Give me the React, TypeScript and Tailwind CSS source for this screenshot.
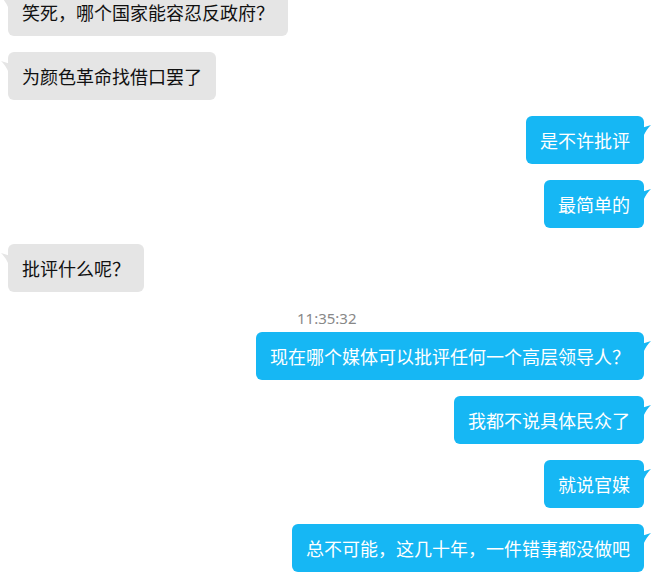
import React from "react";

type Msg = { side: "l" | "r"; text: string; time?: string };

const msgs: Msg[] = [
  { side: "l", text: "笑死，哪个国家能容忍反政府？" },
  { side: "l", text: "为颜色革命找借口罢了" },
  { side: "r", text: "是不许批评" },
  { side: "r", text: "最简单的" },
  { side: "l", text: "批评什么呢？" },
  { side: "r", text: "现在哪个媒体可以批评任何一个高层领导人？", time: "11:35:32" },
  { side: "r", text: "我都不说具体民众了" },
  { side: "r", text: "就说官媒" },
  { side: "r", text: "总不可能，这几十年，一件错事都没做吧" },
];

function Bubble({ m }: { m: Msg }) {
  const left = m.side === "l";
  return (
    <div className="flex flex-col">
      {m.time && (
        <div
          className="h-[20px] mb-[4px] pl-[297px] text-[15px] leading-[20px] text-[#888888]"
          style={{ fontFamily: '"Noto Sans", "Open Sans", sans-serif' }}
        >
          {m.time}
        </div>
      )}
      <div className={left ? "flex justify-start pl-2" : "flex justify-end pr-3"}>
        <div
          className={
            "relative h-12 px-[14px] flex items-center rounded-[6px] text-[18px] whitespace-nowrap " +
            (left ? "bg-[#e5e5e5] text-[#111111]" : "bg-[#16b7f4] text-white")
          }
        >
          {left ? (
            <svg className="absolute left-[-7px] top-[9px]" width="8" height="13" viewBox="0 0 8 13">
              <path d="M0 0 L8 2.5 L8 12 Q4.5 4 0 0 Z" fill="#e5e5e5" />
            </svg>
          ) : (
            <svg className="absolute right-[-7px] top-[9px]" width="8" height="13" viewBox="0 0 8 13">
              <path d="M8 0 L0 2.5 L0 12 Q3.5 4 8 0 Z" fill="#16b7f4" />
            </svg>
          )}
          <span className="leading-[24px]">{m.text}</span>
        </div>
      </div>
    </div>
  );
}

export default function App() {
  return (
    <div
      className="w-[656px] h-[580px] bg-white overflow-hidden"
      style={{ fontFamily: '"Noto Sans CJK SC", "Noto Sans", sans-serif' }}
    >
      <div className="flex flex-col gap-4 mt-[-12px]">
        {msgs.map((m, i) => (
          <Bubble key={i} m={m} />
        ))}
      </div>
    </div>
  );
}
